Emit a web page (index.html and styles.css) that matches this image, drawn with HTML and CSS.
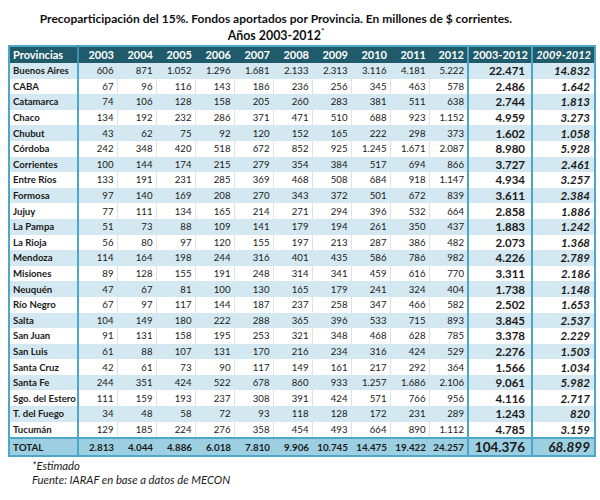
FILE: index.html
```html
<!DOCTYPE html>
<html lang="es">
<head>
<meta charset="utf-8">
<title>Precoparticipación del 15%</title>
<link rel="stylesheet" href="styles.css">
</head>
<body>
<div class="page">
  <div class="title">
    <div>Precoparticipación del 15%. Fondos aportados por Provincia. En millones de $ corrientes.</div>
    <div>Años 2003-2012<sup>*</sup></div>
  </div>
  <table class="data">
    <colgroup>
      <col class="c-prov"><col class="c-year"><col class="c-year"><col class="c-year"><col class="c-year"><col class="c-year"><col class="c-year"><col class="c-year"><col class="c-year"><col class="c-year"><col class="c-year"><col class="c-sum"><col class="c-sum2">
    </colgroup>
    <thead>
      <tr><th class="prov">Provincias</th><th>2003</th><th>2004</th><th>2005</th><th>2006</th><th>2007</th><th>2008</th><th>2009</th><th>2010</th><th>2011</th><th class="last-year">2012</th><th class="sum">2003-2012</th><th class="sum2">2009-2012</th></tr>
    </thead>
    <tbody id="rows"></tbody>
    <tfoot>
      <tr><td class="prov">TOTAL</td><td>2.813</td><td>4.044</td><td>4.886</td><td>6.018</td><td>7.810</td><td>9.906</td><td>10.745</td><td>14.475</td><td>19.422</td><td class="last-year">24.257</td><td class="sum">104.376</td><td class="sum2">68.899</td></tr>
    </tfoot>
  </table>
  <div class="notes">
    <div>*Estimado</div>
    <div>Fuente: IARAF en base a datos de MECON</div>
  </div>
</div>
<script src="script.js"></script>
</body>
</html>
```
FILE: script.js
```js
var data = [
["Buenos Aires","606","871","1.052","1.296","1.681","2.133","2.313","3.116","4.181","5.222","22.471","14.832"],
["CABA","67","96","116","143","186","236","256","345","463","578","2.486","1.642"],
["Catamarca","74","106","128","158","205","260","283","381","511","638","2.744","1.813"],
["Chaco","134","192","232","286","371","471","510","688","923","1.152","4.959","3.273"],
["Chubut","43","62","75","92","120","152","165","222","298","373","1.602","1.058"],
["Córdoba","242","348","420","518","672","852","925","1.245","1.671","2.087","8.980","5.928"],
["Corrientes","100","144","174","215","279","354","384","517","694","866","3.727","2.461"],
["Entre Ríos","133","191","231","285","369","468","508","684","918","1.147","4.934","3.257"],
["Formosa","97","140","169","208","270","343","372","501","672","839","3.611","2.384"],
["Jujuy","77","111","134","165","214","271","294","396","532","664","2.858","1.886"],
["La Pampa","51","73","88","109","141","179","194","261","350","437","1.883","1.242"],
["La Rioja","56","80","97","120","155","197","213","287","386","482","2.073","1.368"],
["Mendoza","114","164","198","244","316","401","435","586","786","982","4.226","2.789"],
["Misiones","89","128","155","191","248","314","341","459","616","770","3.311","2.186"],
["Neuquén","47","67","81","100","130","165","179","241","324","404","1.738","1.148"],
["Río Negro","67","97","117","144","187","237","258","347","466","582","2.502","1.653"],
["Salta","104","149","180","222","288","365","396","533","715","893","3.845","2.537"],
["San Juan","91","131","158","195","253","321","348","468","628","785","3.378","2.229"],
["San Luis","61","88","107","131","170","216","234","316","424","529","2.276","1.503"],
["Santa Cruz","42","61","73","90","117","149","161","217","292","364","1.566","1.034"],
["Santa Fe","244","351","424","522","678","860","933","1.257","1.686","2.106","9.061","5.982"],
["Sgo. del Estero","111","159","193","237","308","391","424","571","766","956","4.116","2.717"],
["T. del Fuego","34","48","58","72","93","118","128","172","231","289","1.243","820"],
["Tucumán","129","185","224","276","358","454","493","664","890","1.112","4.785","3.159"]
];
var tb = document.getElementById("rows");
data.forEach(function (r, i) {
  var tr = document.createElement("tr");
  tr.className = i % 2 === 0 ? "odd" : "even";
  r.forEach(function (v, j) {
    var td = document.createElement("td");
    td.textContent = v;
    if (j === 0) td.className = "prov";
    else if (j === 10) td.className = "last-year";
    else if (j === 11) td.className = "sum";
    else if (j === 12) td.className = "sum2";
    tr.appendChild(td);
  });
  tb.appendChild(tr);
});
```
FILE: styles.css
```css
html, body {
  margin: 0;
  padding: 0;
  background: #ffffff;
}
.page {
  width: 600px;
  padding: 10px 0 0 8px;
  box-sizing: border-box;
  font-family: Lato, "Open Sans", sans-serif;
  color: #1a1a1a;
}
.title {
  width: 536px;
  text-align: center;
  font-weight: 700;
  font-size: 12px;
  line-height: 17px;
  color: #111;
  margin-bottom: 1px;
}
.title div:last-child {
  font-size: 12.4px;
}
.title sup {
  font-size: 8px;
  line-height: 0;
  vertical-align: 6px;
}
.data {
  width: 586px;
  table-layout: fixed;
  border-collapse: collapse;
  border: 2px solid #4ea6c8;
  font-size: 9.6px;
}
.c-prov { width: 69px; }
.c-year { width: 39px; }
.c-sum { width: 64px; }
.c-sum2 { width: 63px; }
.data th, .data td {
  padding: 0 3px 0 0;
  text-align: right;
  white-space: nowrap;
  overflow: hidden;
}
.data thead th {
  background: #1f5b6b;
  color: #ffffff;
  font-size: 11px;
  font-weight: 700;
  height: 16px;
  line-height: 16px;
}
.data thead th.prov {
  text-align: left;
  padding-left: 3px;
  border-right: 2px solid #3f90ad;
}
.data thead th.last-year,
.data thead th.sum {
  border-right: 2px solid #4ea6c8;
}
.data thead th.sum2 {
  font-style: italic;
}
.data tbody td {
  height: 15.6px;
  line-height: 15px;
  border-right: 1px solid #dfe3e5;
}
.data tbody tr.odd td { background: #d3e8f0; }
.data tbody tr.odd td { border-right-color: #d3e8f0; }
.data tbody tr.even td { background: #ffffff; }
.data td.prov {
  text-align: left;
  padding-left: 3px;
  font-weight: 700;
  border-right: 2px solid #4ea6c8 !important;
}
.data td.last-year,
.data td.sum {
  border-right: 2px solid #4ea6c8 !important;
}
.data tbody td.sum {
  font-weight: 700;
  font-size: 11.5px;
  padding-right: 6px;
}
.data tbody td.sum2 {
  font-weight: 700;
  font-style: italic;
  font-size: 11.5px;
  padding-right: 4px;
}
.data tfoot td {
  background: #9ccfe1;
  border-top: 2px solid #4ea6c8;
  font-weight: 700;
  height: 16px;
  line-height: 16px;
  font-size: 9.8px;
}
.data tfoot td.prov { color: #1a1a1a; }
.data tfoot td.sum {
  font-size: 13.5px;
  padding-right: 6px;
}
.data tfoot td.sum2 {
  font-size: 13.5px;
  font-style: italic;
  padding-right: 4px;
}
.notes {
  padding-left: 24px;
  margin-top: 2px;
  font-style: italic;
  font-size: 11.3px;
  line-height: 14px;
  color: #1a1a1a;
}
```
